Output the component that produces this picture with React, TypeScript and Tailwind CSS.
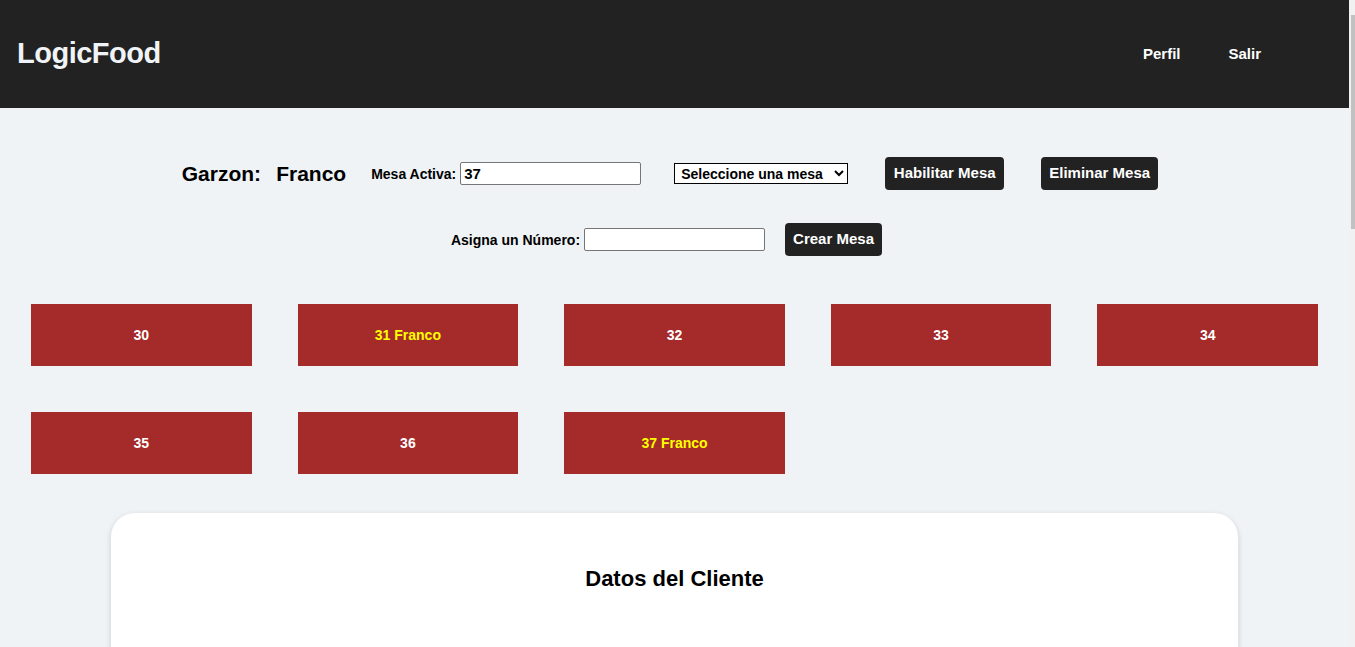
import React from "react";

const font = { fontFamily: '"Liberation Sans", Arial, sans-serif' };

const mesas = [
  { n: "30", who: "" },
  { n: "31", who: "Franco" },
  { n: "32", who: "" },
  { n: "33", who: "" },
  { n: "34", who: "" },
  { n: "35", who: "" },
  { n: "36", who: "" },
  { n: "37", who: "Franco" },
];

export default function App() {
  return (
    <div className="h-screen flex overflow-hidden bg-[#eff3f6] font-bold text-black" style={font}>
      <div className="flex-1 min-w-0 overflow-hidden">
        <header className="h-[108px] bg-[#222222] flex items-center justify-between pl-[17px] pr-[88px]">
          <h1 className="text-[29px] font-bold text-[#f0f4f8] tracking-[-0.5px]">LogicFood</h1>
          <nav className="flex items-center gap-[48px] text-[15px] text-white">
            <a>Perfil</a>
            <a>Salir</a>
          </nav>
        </header>

        <div className="flex items-center justify-center mt-[49px] h-[33px] pr-[9px]">
          <span className="text-[21px]">Garzon:</span>
          <span className="text-[21px] ml-[15px]">Franco</span>
          <label className="text-[14px] ml-[25px] mt-[2px]">Mesa Activa:</label>
          <input
            readOnly
            value="37"
            className="ml-[4px] w-[181px] h-[23px] border border-[#767676] rounded-[2px] bg-white px-[3px] text-[15px] font-bold"
            style={font}
          />
          <select
            className="ml-[33px] w-[174px] h-[21px] border border-black bg-white text-[14px] font-bold pl-[2px]"
            style={font}
          >
            <option>Seleccione una mesa</option>
          </select>
          <button className="ml-[37px] h-[33px] w-[119px] bg-[#222222] text-white text-[15px] rounded-[4px]">
            Habilitar Mesa
          </button>
          <button className="ml-[37px] h-[33px] w-[117px] bg-[#222222] text-white text-[15px] rounded-[4px]">
            Eliminar Mesa
          </button>
        </div>

        <div className="flex items-center justify-center mt-[33px] h-[33px] pr-[16px]">
          <label className="text-[14px] mt-[2px]">Asigna un Número:</label>
          <input
            className="ml-[4px] w-[181px] h-[23px] border border-[#767676] rounded-[2px] bg-white px-[3px]"
            style={font}
          />
          <button className="ml-[20px] h-[33px] w-[97px] bg-[#222222] text-white text-[15px] rounded-[4px]">
            Crear Mesa
          </button>
        </div>

        <div className="grid grid-cols-5 gap-x-[46px] gap-y-[46px] px-[31px] mt-[48px]">
          {mesas.map((m) => (
            <div
              key={m.n}
              className={`h-[62px] bg-[#a52a2a] flex items-center justify-center text-[14px] ${
                m.who ? "text-[#ffff00]" : "text-white"
              }`}
            >
              {m.who ? `${m.n} ${m.who}` : m.n}
            </div>
          ))}
        </div>

        <div className="mx-auto w-[1127px] mt-[39px] bg-white rounded-[24px] shadow-[0_2px_6px_rgba(0,0,0,0.15)] h-[400px] pt-[49px]">
          <h2 className="text-center text-[22px]">Datos del Cliente</h2>
        </div>
      </div>
      <div className="w-[6px] shrink-0 bg-[#f1f1f1] flex flex-col">
        <div className="h-[15px]" />
        <div className="ml-[2px] w-[4px] h-[214px] bg-[#c1c1c1]" />
      </div>
    </div>
  );
}
